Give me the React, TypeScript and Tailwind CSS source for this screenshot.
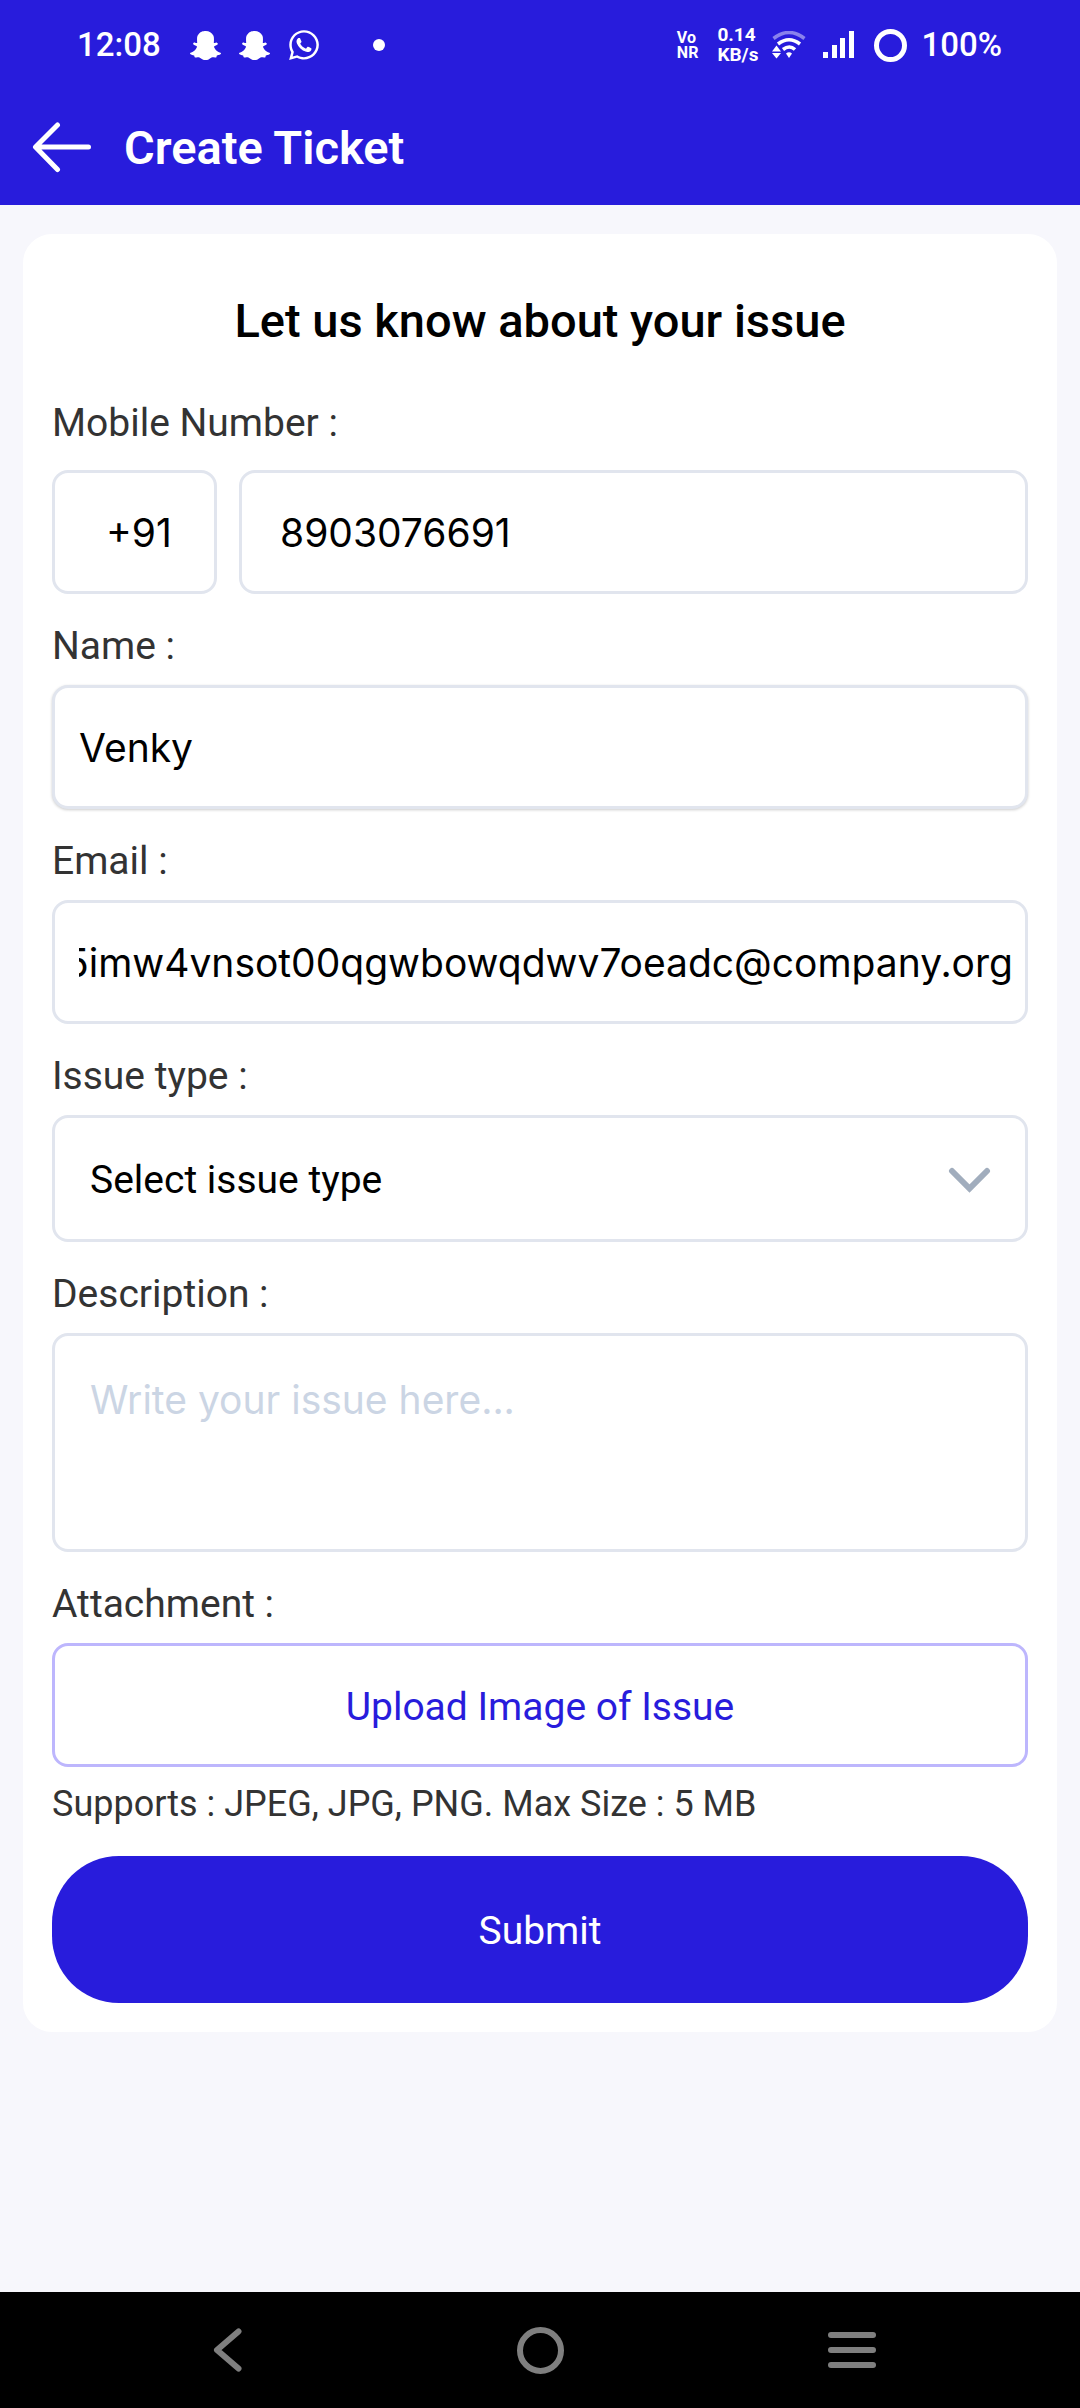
import { useEffect, useRef } from "react";
import type { ReactNode } from "react";
import { FaSnapchatGhost, FaWhatsapp } from "react-icons/fa";

const fieldClass =
  "block w-full rounded-2xl border-3 border-[#e1e5ee] bg-white text-[39px] text-black outline-none placeholder:text-[#cbd5e4]";

function WifiIcon() {
  return (
    <svg width="34" height="28" viewBox="0 0 34 28" fill="none" stroke="white" aria-hidden="true">
      <path d="M1.5 7.5Q17-4.500 32.500 7.500" strokeWidth="3.500" opacity="0.450" />
      <path d="M6 13Q17 4.500 28 13" strokeWidth="3.500" />
      <path d="M11 18.500Q17.500 13.500 23 18.500" strokeWidth="3.500" />
      <path d="M14 22.500Q17 20 20 22.500L17 27Z" fill="white" stroke="none" />
      <path d="M0 20.500L4.500 14.500L9 20.500Z" fill="white" stroke="none" />
      <path d="M0 22L4.500 27.500L9 22Z" fill="white" stroke="none" />
    </svg>
  );
}

function SignalIcon() {
  return (
    <svg width="32" height="28" viewBox="0 0 32 28" fill="white" aria-hidden="true">
      <rect x="0" y="21" width="5" height="6" />
      <rect x="9" y="14" width="5" height="13" />
      <rect x="17" y="7" width="5" height="20" />
      <rect x="26" y="0" width="5" height="27" />
    </svg>
  );
}

function StatusBar() {
  return (
    <div className="flex h-[90px] items-center justify-between pr-[78px] pl-[77px] text-[33px] leading-10 font-medium">
      <div className="flex items-center">
        <span>12:08</span>
        <FaSnapchatGhost className="ml-[29px] size-[31px]" />
        <FaSnapchatGhost className="ml-[18px] size-[31px]" />
        <FaWhatsapp className="ml-[17px] size-[34px]" />
        <span className="ml-[52px] size-3 rounded-full bg-white" />
      </div>
      <div className="flex items-center">
        <span className="flex flex-col text-[16px] leading-[15px] font-bold">
          <span>Vo</span>
          <span>NR</span>
        </span>
        <span className="ml-[19px] flex flex-col text-[19px] leading-5 font-bold">
          <span>0.14</span>
          <span>KB/s</span>
        </span>
        <span className="ml-[14px]"><WifiIcon /></span>
        <span className="ml-[17px]"><SignalIcon /></span>
        <span className="ml-[19px] size-[33px] rounded-full border-5 border-white" />
        <span className="ml-[14px]">100%</span>
      </div>
    </div>
  );
}

function Label({ htmlFor, children }: { htmlFor: string; children: ReactNode }) {
  return (
    <label htmlFor={htmlFor} className="mt-7 mb-[15px] block text-[39px] leading-[48px] text-[#333333]">
      {children}
    </label>
  );
}

export default function App() {
  const emailRef = useRef<HTMLInputElement>(null);

  // Keep the end of a long address in view.
  useEffect(() => {
    if (emailRef.current) emailRef.current.scrollLeft = emailRef.current.scrollWidth;
  }, []);

  return (
    <div className="flex min-h-screen flex-col bg-[#f7f7fc] font-[Roboto,sans-serif]">
      <header className="bg-[#281cdc] text-white">
        <StatusBar />
        <div className="flex h-[115px] items-center pl-8">
          <button type="button" aria-label="Back">
            <svg width="60" height="52" viewBox="0 0 60 52" fill="none" stroke="white" strokeWidth="5" strokeLinecap="round" strokeLinejoin="round" aria-hidden="true">
              <path d="M56.500 25H4M25.500 3L3.500 25L25.500 47.500" />
            </svg>
          </button>
          <h1 className="ml-8 text-[47px] leading-[56px] font-semibold">Create Ticket</h1>
        </div>
      </header>

      <main className="flex-1 px-[23px] pt-[29px]">
        <form className="rounded-[29px] bg-white px-[29px] pt-[59px] pb-[29px]" onSubmit={(e) => e.preventDefault()}>
          <h2 className="text-center text-[47px] leading-[56px] font-medium text-black">
            Let us know about your issue
          </h2>

          <label htmlFor="mobile" className="mt-[50px] mb-[23px] block text-[39px] leading-[48px] text-[#333333]">
            Mobile Number :
          </label>
          <div className="flex gap-[22px] font-[Inter,sans-serif]">
            <div className="w-[165px] shrink-0">
              <input aria-label="Country code" defaultValue="+91" className={`${fieldClass} h-[124px] pl-[51px]`} />
            </div>
            <input id="mobile" type="tel" defaultValue="8903076691" className={`${fieldClass} h-[124px] min-w-0 px-[38px]`} />
          </div>

          <Label htmlFor="name">Name :</Label>
          <input
            id="name"
            defaultValue="Venky"
            className={`${fieldClass} h-[124px] px-6 font-[Inter,sans-serif] shadow-[0_1px_3px_rgba(0,0,0,0.2)]`}
          />

          <Label htmlFor="email">Email :</Label>
          <input
            id="email"
            ref={emailRef}
            type="text"
            inputMode="email"
            defaultValue="5imw4vnsot00qgwbowqdwv7oeadc@company.org"
            className={`${fieldClass} h-[124px] pr-3 pl-6 font-[Inter,sans-serif]`}
          />

          <Label htmlFor="issue">Issue type :</Label>
          <div className="relative">
            <select id="issue" defaultValue="" className={`${fieldClass} h-[127px] appearance-none px-[35px] pt-1`}>
              <option value="">Select issue type</option>
            </select>
            <svg className="pointer-events-none absolute top-[52px] right-[37px]" width="43" height="26" viewBox="0 0 43 26" fill="none" stroke="#a1adbd" strokeWidth="6" strokeLinecap="round" aria-hidden="true">
              <path d="M4 4L21.500 21.500L39 4" />
            </svg>
          </div>

          <Label htmlFor="description">Description :</Label>
          <textarea
            id="description"
            placeholder="Write your issue here..."
            className={`${fieldClass} h-[219px] resize-none px-[35px] pt-10 font-[Inter,sans-serif] leading-[48px]`}
          />

          <Label htmlFor="attachment">Attachment :</Label>
          <button
            id="attachment"
            type="button"
            className="block h-[124px] w-full rounded-2xl border-3 border-[#bdb6fd] pt-1 text-[39px] text-[#281cdc]"
          >
            Upload Image of Issue
          </button>
          <p className="mt-[15px] text-[36px] leading-[44px] text-[#333333]">
            Supports : JPEG, JPG, PNG. Max Size : 5 MB
          </p>

          <button type="submit" className="mt-[30px] block h-[147px] w-full rounded-[67px] bg-[#281cdc] pt-1 text-[39px] text-white">
            Submit
          </button>
        </form>
      </main>

      <nav className="flex h-[116px] items-center justify-between bg-black px-[200px]" aria-label="System">
        <button type="button" aria-label="Back" className="flex w-14 justify-center">
          <svg width="30" height="44" viewBox="0 0 30 44" fill="none" stroke="#7f7f7f" strokeWidth="6" strokeLinecap="round" strokeLinejoin="round" aria-hidden="true">
            <path d="M25.500 3.500L4 22L25.500 40.500" />
          </svg>
        </button>
        <button type="button" aria-label="Home" className="flex w-14 justify-center">
          <span className="size-[47px] rounded-full border-6 border-[#7f7f7f]" />
        </button>
        <button type="button" aria-label="Recent apps" className="flex w-14 flex-col items-center gap-[9px]">
          <span className="h-[6px] w-12 rounded-full bg-[#7f7f7f]" />
          <span className="h-[6px] w-12 rounded-full bg-[#7f7f7f]" />
          <span className="h-[6px] w-12 rounded-full bg-[#7f7f7f]" />
        </button>
      </nav>
    </div>
  );
}
